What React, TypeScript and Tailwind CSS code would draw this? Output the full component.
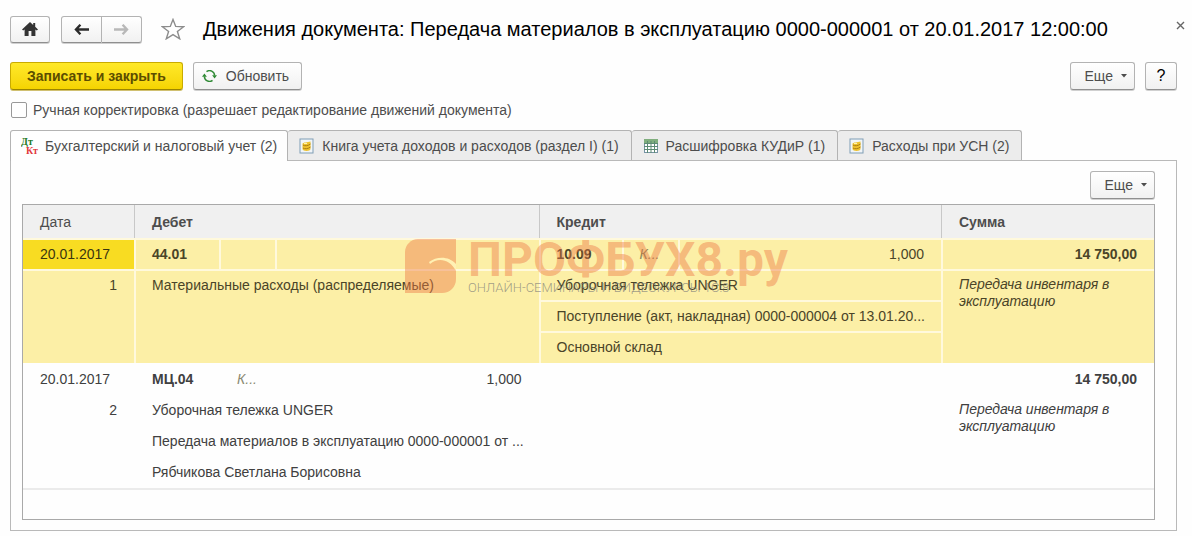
import type { ReactNode } from 'react'

const buttonBase =
  'flex items-center rounded-[3px] border border-[#b3b3b3] border-b-[#8f8f8f] bg-linear-to-b from-white to-[#f1f1f1] text-[#4d4d4d] shadow-[0_1px_0_#d0d0d0]'

function HomeIcon() {
  return (
    <svg width="16" height="14" viewBox="0 0 16 14" fill="#333">
      <path d="M8 0 0 7.4l1.2 1.2L2.6 7.4V14h4V9h2.8v5h4V7.4l1.4 1.2L16 7.4l-2.8-2.6V1h-2v2z" />
    </svg>
  )
}

function ArrowIcon({ className }: { className: string }) {
  return (
    <svg width="15" height="11" viewBox="0 0 15 11" fill="none" stroke="currentColor" strokeWidth="2.4" className={className}>
      <path d="M6.4.8 2 5.5l4.4 4.7M2 5.5h13" />
    </svg>
  )
}

function StarIcon() {
  return (
    <svg width="24" height="22" viewBox="0 0 24 22" fill="#fff" stroke="#8c8c8c" strokeWidth="1.4">
      <path d="m12 1.5 2.7 6.9 8 .3-6.3 4.7 2.3 7.4L12 16.6l-6.7 4.2 2.3-7.4L1.3 8.7l8-.3z" />
    </svg>
  )
}

function RefreshIcon() {
  return (
    <svg width="15" height="12" viewBox="0 0 15 12" fill="none" stroke="#2f8a35" strokeWidth="1.5">
      <path d="M4.5 1.7A5 5 0 0 1 12.6 5.5M10.5 10.3A5 5 0 0 1 2.4 6.5" />
      <path d="M0 6.8 2.4 3.6l2.5 3.2zM10.1 5.2H15l-2.4 3.2z" fill="#2f8a35" stroke="none" />
    </svg>
  )
}

function DtKtIcon() {
  return (
    <svg width="18" height="18" viewBox="0 0 18 18" className="font-['Liberation_Serif',serif] text-[10px] font-bold">
      <text x="0" y="8" fill="#1d7a22">Дт</text>
      <text x="5" y="17" fill="#e2383c">Кт</text>
    </svg>
  )
}

function RegisterIcon() {
  return (
    <svg width="16" height="16" viewBox="0 0 16 16">
      <rect x="1" y="1" width="13" height="14" fill="#f1f5f8" stroke="#7f9db5" />
      <path d="M3.5 6c0-1 1.500-1.500 3-1.500l5-1v7.500c0 1.200-2 2-4 2s-4-.8-4-2z" fill="#edc22e" />
      <path d="M4 7c1.500 1.200 5 1 7.500-1M4 10c1.500 1.200 5 1 7.500-1" fill="none" stroke="#a97a12" />
      <path d="M5 5.500h3" stroke="#fff3b0" />
    </svg>
  )
}

function TableIcon() {
  return (
    <svg width="16" height="16" viewBox="0 0 16 16">
      <rect x="1.500" y="1.500" width="13" height="13" fill="#fff" stroke="#7693a4" />
      <path d="M1 1h14v4H1z" fill="#7fae7d" />
      <path d="M1 5.500h14M1 8.500h14M1 11.500h14M4.500 3v12M8 3v12M11.500 3v12" stroke="#5d8b73" />
    </svg>
  )
}

function MoreButton() {
  return (
    <button type="button" className={`${buttonBase} h-7 gap-2 pr-[7px] pl-[14px]`}>
      Еще
      <svg width="6" height="4" viewBox="0 0 6 4" fill="#4d4d4d">
        <path d="M0 0h6L3 3.500z" />
      </svg>
    </button>
  )
}

const tabs: { label: string; icon: ReactNode }[] = [
  { label: 'Бухгалтерский и налоговый учет (2)', icon: <DtKtIcon /> },
  { label: 'Книга учета доходов и расходов (раздел I) (1)', icon: <RegisterIcon /> },
  { label: 'Расшифровка КУДиР (1)', icon: <TableIcon /> },
  { label: 'Расходы при УСН (2)', icon: <RegisterIcon /> },
]

function Watermark() {
  return (
    <div className="pointer-events-none absolute top-[34px] left-[382px] flex gap-3 whitespace-nowrap">
      <svg width="51" height="54" viewBox="0 0 51 54">
        <path d="M13 0h38v40c0 8-6 14-14 14H0V13C0 6 6 0 13 0z" fill="#ee7a48" fillOpacity="0.45" />
        <path d="M25 25c8-7 20-5 26 7v-7C44 17 32 17 24 23z" fill="#fff1b4" />
      </svg>
      <div className="font-['Roboto',sans-serif]">
        <div className="text-[48px] leading-[42px] font-bold text-[#ee7a48]/45">ПРОФБУХ8.ру</div>
        <div className="text-[13px] leading-[14px] font-light text-[#777]/70">ОНЛАЙН-СЕМИНАРЫ И ВИДЕОКУРСЫ 1С:8</div>
      </div>
    </div>
  )
}

function EntriesTable() {
  return (
    <table className="w-full table-fixed border-separate border-spacing-0 border-b-2 border-[#ebebeb] text-left whitespace-nowrap text-[#404040] [&_td]:border-t-2 [&_td]:border-l-2 [&_td]:pt-[5px] [&_td]:pr-[17px] [&_td]:pb-[6px] [&_td]:pl-4 [&_td]:align-top [&_th]:px-[17px]">
      <colgroup>
        <col className="w-[111px]" />
        <col className="w-[85px]" />
        <col className="w-[56px]" />
        <col />
        <col className="w-[83px]" />
        <col className="w-[56px]" />
        <col />
        <col className="w-[213px]" />
      </colgroup>
      <thead className="bg-[#f0f0f0] text-[#4d4d4d]">
        <tr className="h-[33px]">
          <th className="font-normal">Дата</th>
          <th colSpan={3} className="border-l border-[#c8c8c8]">Дебет</th>
          <th colSpan={3} className="border-l border-[#c8c8c8]">Кредит</th>
          <th className="border-l border-[#c8c8c8]">Сумма</th>
        </tr>
      </thead>
      <tbody className="bg-[#fcefa6] text-[#4a4428] [&_td]:border-[#fff9dc]">
        <tr>
          <td className="border-l-0! bg-[#f8dc22] pl-[17px]! text-[#3a3510]">20.01.2017</td>
          <td className="font-bold">44.01</td>
          <td></td>
          <td></td>
          <td className="font-bold">10.09</td>
          <td className="text-[#8a8455] italic">К...</td>
          <td className="text-right">1,000</td>
          <td className="text-right font-bold">14 750,00</td>
        </tr>
        <tr>
          <td rowSpan={3} className="border-l-0! text-right">1</td>
          <td rowSpan={3} colSpan={3}>Материальные расходы (распределяемые)</td>
          <td colSpan={3}>Уборочная тележка UNGER</td>
          <td rowSpan={3} className="leading-[17px] whitespace-normal italic">Передача инвентаря в эксплуатацию</td>
        </tr>
        <tr>
          <td colSpan={3}>Поступление (акт, накладная) 0000-000004 от 13.01.20...</td>
        </tr>
        <tr className="h-8">
          <td colSpan={3}>Основной склад</td>
        </tr>
      </tbody>
      <tbody className="[&_td]:border-transparent">
        <tr>
          <td className="border-l-0! pl-[17px]!">20.01.2017</td>
          <td className="font-bold">МЦ.04</td>
          <td className="text-[#8a8a72] italic">К...</td>
          <td className="text-right">1,000</td>
          <td colSpan={3}></td>
          <td className="text-right font-bold">14 750,00</td>
        </tr>
        <tr>
          <td rowSpan={3} className="text-right">2</td>
          <td colSpan={3}>Уборочная тележка UNGER</td>
          <td rowSpan={3} colSpan={3}></td>
          <td rowSpan={3} className="leading-[17px] whitespace-normal italic">Передача инвентаря в эксплуатацию</td>
        </tr>
        <tr>
          <td colSpan={3}>Передача материалов в эксплуатацию 0000-000001 от ...</td>
        </tr>
        <tr className="h-8">
          <td colSpan={3}>Рябчикова Светлана Борисовна</td>
        </tr>
      </tbody>
    </table>
  )
}

export default function App() {
  return (
    <main className="bg-[#fefefe] pt-[15px] pr-[15px] pb-[6px] pl-[10px] font-['Liberation_Sans',Arial,sans-serif] text-[14px] leading-[18px] text-[#4d4d4d]">
      <header className="flex h-7 items-center">
        <button type="button" aria-label="Домой" className={`${buttonBase} h-[27px] w-10 justify-center`}>
          <HomeIcon />
        </button>
        <div className="ml-[11px] flex">
          <button type="button" aria-label="Назад" className={`${buttonBase} h-[27px] w-[41px] justify-center rounded-r-none`}>
            <ArrowIcon className="text-[#2b2b2b]" />
          </button>
          <button type="button" aria-label="Вперед" className={`${buttonBase} h-[27px] w-10 justify-center rounded-l-none border-l-0`}>
            <ArrowIcon className="rotate-180 text-[#b8b8b8]" />
          </button>
        </div>
        <button type="button" aria-label="В избранное" className="ml-[19px]">
          <StarIcon />
        </button>
        <h1 className="ml-[18px] text-[20px] leading-7 whitespace-nowrap text-black">
          Движения документа: Передача материалов в эксплуатацию 0000-000001 от 20.01.2017 12:00:00
        </h1>
        <button type="button" aria-label="Закрыть" className="-mr-2 ml-auto self-start pt-[6px]">
          <svg width="9" height="9" viewBox="0 0 9 9" stroke="#666" strokeWidth="1.4">
            <path d="m1 1 7 7M8 1 1 8" />
          </svg>
        </button>
      </header>

      <div className="mt-[19px] flex gap-[10px]">
        <button
          type="button"
          className="h-7 rounded-[3px] border border-[#c9ab00] border-b-[#9c8500] bg-linear-to-b from-[#ffe927] to-[#f5d400] px-4 font-bold text-[#5c4d00] shadow-[0_1px_0_#d0c070]"
        >
          Записать и закрыть
        </button>
        <button type="button" className={`${buttonBase} h-7 gap-[9px] pr-3 pl-2`}>
          <RefreshIcon />
          Обновить
        </button>
        <div className="ml-auto">
          <MoreButton />
        </div>
        <button type="button" aria-label="Справка" className={`${buttonBase} h-7 w-8 justify-center text-[16px] text-black`}>
          ?
        </button>
      </div>

      <label className="mt-[11px] flex h-[18px] items-center gap-[6px] pl-px">
        <input type="checkbox" className="size-4 appearance-none rounded-[2px] border border-[#999] bg-white" />
        Ручная корректировка (разрешает редактирование движений документа)
      </label>

      <div role="tablist" className="mt-[11px] flex">
        {tabs.map((tab, i) => (
          <button
            key={tab.label}
            type="button"
            role="tab"
            aria-selected={i === 0}
            className={
              i === 0
                ? 'relative -mb-px flex h-[31px] items-center gap-[6px] rounded-t-[3px] border border-b-0 border-[#b3b3b3] bg-[#fefefe] px-[10px]'
                : 'flex h-[30px] items-center gap-[7px] rounded-t-[3px] border border-b-0 border-l-0 border-[#b3b3b3] bg-[#ececec] pr-3 pl-[11px]'
            }
          >
            {tab.icon}
            {tab.label}
          </button>
        ))}
      </div>

      <section className="border border-[#b9b9b9] px-[11px] pt-[10px] pb-[10px]">
        <div className="mr-[10px] flex justify-end">
          <MoreButton />
        </div>
        <div className="relative mt-[5px] mr-[10px] border border-[#a9a9a9] pb-[29px]">
          <EntriesTable />
          <Watermark />
        </div>
      </section>
    </main>
  )
}
